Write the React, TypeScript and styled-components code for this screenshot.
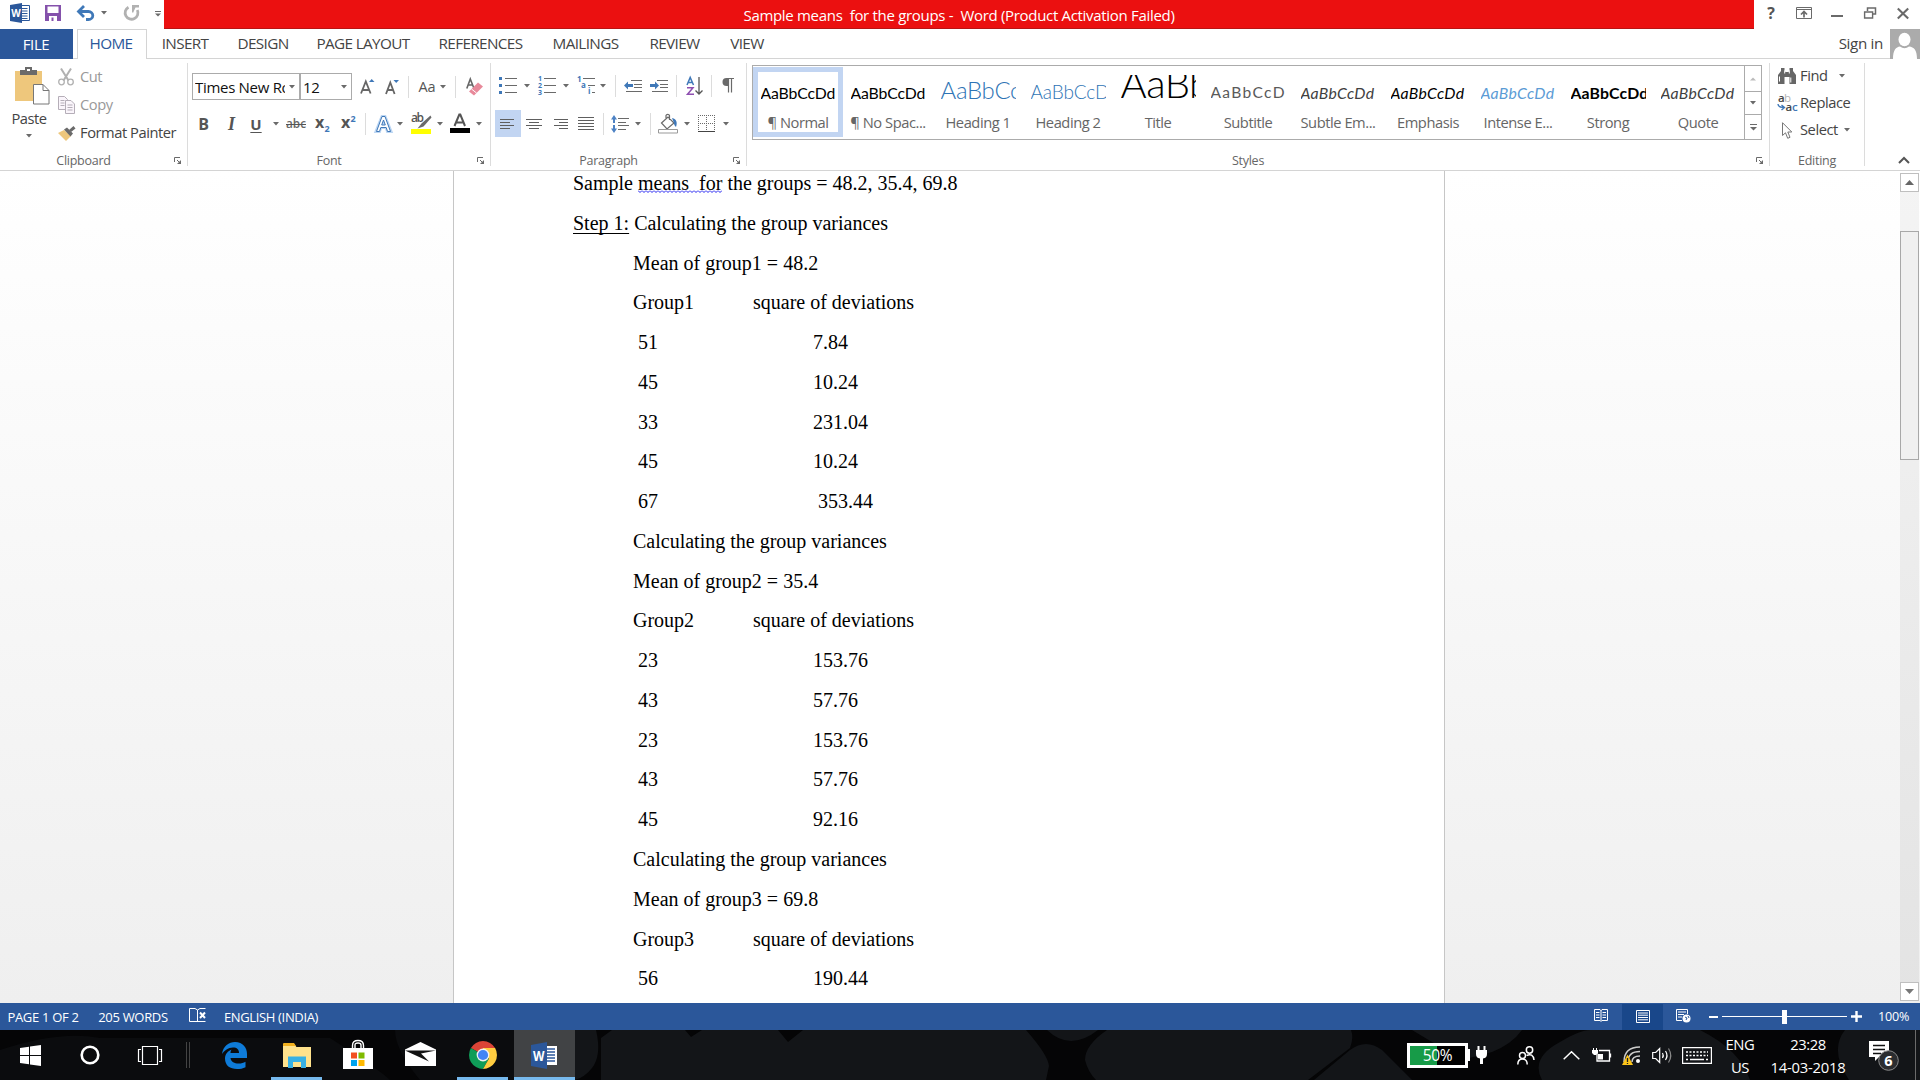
import React from "react";
import styled, { createGlobalStyle, css } from "styled-components";

const UI = `"Open Sans", "Noto Sans", sans-serif`;
const DOC = `"Liberation Serif", "Times New Roman", serif`;

const Global = createGlobalStyle`
  * { box-sizing: border-box; }
  html, body { margin: 0; padding: 0; overflow: hidden; }
  svg { display: block; flex: none; overflow: visible; }
`;

const Screen = styled.div`
  display: flex;
  flex-direction: column;
  width: 1920px;
  height: 1080px;
  overflow: hidden;
  background: #fff;
  font-family: ${UI};
  color: #444;
`;

const Label = styled.span<{ $size?: number; $ls?: number; $color?: string }>`
  flex: none;
  white-space: pre;
  font-size: ${(p) => p.$size ?? 14.7}px;
  letter-spacing: ${(p) => p.$ls ?? -0.45}px;
  color: ${(p) => p.$color ?? "#444"};
`;

const Slot = styled.div<{ $w: number; $ml?: number; $mt?: number }>`
  flex: none;
  display: flex;
  align-items: center;
  justify-content: center;
  width: ${(p) => p.$w}px;
  margin-left: ${(p) => p.$ml ?? 0}px;
  margin-top: ${(p) => p.$mt ?? 0}px;
`;

/* ---------- title bar ---------- */
const TitleBar = styled.header`
  display: flex;
  height: 29px;
`;
const QuickAccess = styled.div`
  display: flex;
  align-items: center;
  width: 164px;
  padding-bottom: 3px;
`;
const Title = styled.div`
  width: 1590px;
  height: 29px;
  background: #eb1010;
  border-bottom: 1px solid #b81414;
  display: flex;
  justify-content: center;
  line-height: 30px;
`;
const WindowButtons = styled.div`
  display: flex;
  align-items: center;
  flex: 1;
  padding-bottom: 3px;
`;

/* ---------- tabs ---------- */
const TabRow = styled.nav`
  display: flex;
  height: 30px;
  border-bottom: 1px solid #d4d4d4;
`;
const FileTab = styled.div`
  width: 73px;
  height: 30px;
  margin-right: 4px;
  padding-right: 1px;
  background: #2b579a;
  display: flex;
  justify-content: center;
  line-height: 30px;
`;
const Tab = styled.div<{ $w: number; $active?: boolean }>`
  width: ${(p) => p.$w}px;
  height: 30px;
  padding-right: 2px;
  display: flex;
  justify-content: center;
  line-height: 28px;
  ${(p) =>
    p.$active &&
    css`
      background: #fff;
      border: 1px solid #d4d4d4;
      border-bottom: 0;
      line-height: 26px;
      margin-right: 1px;
    `}
`;
const Account = styled.div`
  margin-left: auto;
  display: flex;
  line-height: 29px;
  gap: 7px;
  height: 30px;
`;

/* ---------- ribbon ---------- */
const Ribbon = styled.section`
  display: flex;
  height: 112px;
  padding: 4px 0;
  border-bottom: 1px solid #d4d4d4;
`;
const Group = styled.div<{ $w: number }>`
  display: flex;
  flex-direction: column;
  width: ${(p) => p.$w}px;
  height: 103px;
  border-right: 1px solid #dcdcdc;
`;
const GroupBody = styled.div`
  height: 91px;
  display: flex;
`;
const Rows = styled.div`
  display: flex;
  flex-direction: column;
`;
const Row = styled.div<{ $h: number; $mt?: number }>`
  display: flex;
  align-items: center;
  height: ${(p) => p.$h}px;
  margin-top: ${(p) => p.$mt ?? 0}px;
`;
const SideText = styled.div<{ $w: number; $ml: number }>`
  flex: none;
  width: ${(p) => p.$w}px;
  margin-left: ${(p) => p.$ml}px;
  padding-bottom: 2px;
  display: flex;
  white-space: nowrap;
`;
const Caption = styled.div`
  height: 12px;
  display: flex;
  align-items: center;
  line-height: 12px;
`;
const CaptionText = styled.div`
  flex: 1;
  display: flex;
  justify-content: center;
  padding-top: 2px;
`;
const Sep = styled.div<{ $ml: number }>`
  width: 1px;
  height: 22px;
  margin-left: ${(p) => p.$ml}px;
  background: #dcdcdc;
`;
const Combo = styled.div<{ $w: number; $ml?: number }>`
  display: flex;
  align-items: center;
  width: ${(p) => p.$w}px;
  height: 27px;
  margin-left: ${(p) => p.$ml ?? 0}px;
  border: 1px solid #ababab;
  padding: 0 4px 0 2px;
`;
const ComboText = styled.div`
  flex: 1;
  overflow: hidden;
  white-space: nowrap;
  font-size: 15px;
  letter-spacing: -0.3px;
  line-height: 24px;
  color: #111;
`;
const Glyph = styled.span<{ $size: number; $b?: boolean; $i?: boolean; $u?: boolean }>`
  font-size: ${(p) => p.$size}px;
  line-height: 20px;
  color: #555;
  font-weight: ${(p) => (p.$b ? 700 : 400)};
  font-style: ${(p) => (p.$i ? "italic" : "normal")};
  font-family: ${(p) => (p.$i ? DOC : UI)};
  text-decoration: ${(p) => (p.$u ? "underline" : "none")};
  text-decoration-thickness: 1px;
  text-underline-offset: 2px;
`;
const Pressed = styled.div`
  display: flex;
  align-items: center;
  justify-content: center;
  width: 26px;
  height: 27px;
  margin-left: 4px;
  background: #c2d5f2;
`;

/* ---------- style gallery ---------- */
const Gallery = styled.div`
  display: flex;
  width: 1010px;
  height: 75px;
  margin: 2px 0 0 5px;
  border: 1px solid #ababab;
`;
const Style = styled.div<{ $on?: boolean }>`
  width: 90px;
  height: 70px;
  margin-top: 1px;
  border: 5px solid ${(p) => (p.$on ? "#c2d5f2" : "transparent")};
  display: flex;
  flex-direction: column;
  align-items: center;
`;
const Preview = styled.div<{ $size: number; $ls: number; $color: string; $wt: number; $i?: boolean }>`
  width: 75px;
  height: 30px;
  margin-top: 3px;
  overflow: hidden;
  display: flex;
  align-items: flex-end;
  white-space: nowrap;
  font-family: Lato, "Open Sans", sans-serif;
  font-size: ${(p) => p.$size}px;
  letter-spacing: ${(p) => p.$ls}px;
  color: ${(p) => p.$color};
  font-weight: ${(p) => p.$wt};
  font-style: ${(p) => (p.$i ? "italic" : "normal")};
  line-height: ${(p) => 8 + p.$size * 0.74}px;
`;
const StyleName = styled.div`
  margin-top: 9px;
  line-height: 20px;
`;
const GalleryScroll = styled.div`
  margin-left: auto;
  width: 17px;
  border-left: 1px solid #ababab;
  display: flex;
  flex-direction: column;
`;
const GalleryBtn = styled.div<{ $h: number }>`
  height: ${(p) => p.$h}px;
  display: flex;
  align-items: center;
  justify-content: center;
  & + & { border-top: 1px solid #ababab; }
`;

/* ---------- document ---------- */
const Workspace = styled.main`
  display: flex;
  height: 832px;
  background: linear-gradient(#ffffff, #efefef);
`;
const Page = styled.article`
  width: 992px;
  margin-left: 453px;
  border: solid #c6c6c6;
  border-width: 0 1px;
  background: #fff;
  padding-left: 119px;
  overflow: hidden;
`;
const Line = styled.p<{ $indent?: boolean }>`
  margin: 0;
  padding-left: ${(p) => (p.$indent ? 60 : 0)}px;
  height: 39.77px;
  line-height: 39.77px;
  font-family: ${DOC};
  font-size: 20px;
  color: #000;
  white-space: pre;
  tab-size: 60px;
  &:first-child { margin-top: -7px; }
`;
const Flagged = styled.span`
  background: url("data:image/svg+xml,%3Csvg xmlns='http://www.w3.org/2000/svg' width='4' height='3'%3E%3Cpath d='M0 .5L2 2.5 4 .5' fill='none' stroke='%232020f0'/%3E%3C/svg%3E")
    repeat-x 0 calc(100% - 1px);
`;
const Under = styled.span`
  text-decoration: underline 1px;
  text-underline-offset: 3px;
  text-decoration-skip-ink: none;
`;
const Scrollbar = styled.div`
  margin: 2px 1px 2px auto;
  width: 19px;
  display: flex;
  flex-direction: column;
  background: linear-gradient(#f4f4f4, #e3e3e3);
`;
const ScrollBtn = styled.div`
  height: 19px;
  border: 1px solid #bfbfbf;
  background: #fff;
  display: flex;
  align-items: center;
  justify-content: center;
`;
const Thumb = styled.div`
  margin: 39px 0 auto;
  height: 229px;
  border: 1px solid #a8a8a8;
  background: #f0f0f0;
`;

/* ---------- status bar ---------- */
const StatusBar = styled.footer`
  display: flex;
  align-items: center;
  height: 27px;
  background: #2b579a;
`;
const ActiveView = styled.div`
  display: flex;
  align-items: center;
  justify-content: center;
  width: 41px;
  height: 26px;
  margin: 1px 0 0 14px;
  padding-bottom: 2px;
  background: #19478a;
`;
const ZoomTrack = styled.div`
  width: 125px;
  height: 1px;
  margin-left: 4px;
  background: #fff;
  display: flex;
  align-items: center;
  padding-left: 60px;
`;
const ZoomThumb = styled.div`
  flex: none;
  width: 5px;
  height: 14px;
  background: #fff;
`;

/* ---------- taskbar ---------- */
const Taskbar = styled.footer`
  position: relative;
  display: flex;
  height: 50px;
  background: #050506;
  overflow: hidden;
`;
const Wallpaper = styled.svg`
  position: absolute;
  inset: 0;
`;
const TaskItem = styled.div<{ $w: number; $ml?: number; $open?: boolean; $active?: boolean }>`
  position: relative;
  flex: none;
  display: flex;
  align-items: center;
  justify-content: center;
  width: ${(p) => p.$w}px;
  height: 50px;
  margin-left: ${(p) => p.$ml ?? 0}px;
  border-bottom: 3px solid ${(p) => (p.$open ? "#76b9ed" : "transparent")};
  padding-top: 3px;
  background: ${(p) => (p.$active ? "#414345" : "none")};
`;
const Battery = styled.div`
  flex: none;
  position: relative;
  width: 61px;
  height: 25px;
  border: 3px solid #fff;
  background: linear-gradient(90deg, #179b48 27px, #000 27px);
  display: flex;
  justify-content: center;
  line-height: 19px;
`;
const TwoLine = styled.div<{ $w: number; $ml: number }>`
  position: relative;
  flex: none;
  display: flex;
  flex-direction: column;
  align-items: center;
  width: ${(p) => p.$w}px;
  margin-left: ${(p) => p.$ml}px;
  line-height: 22.5px;
  padding-top: 3px;
`;
const ShowDesktop = styled.div`
  position: relative;
  width: 5px;
  margin-left: auto;
  border-left: 1px solid #6b6b6b;
`;

/* ---------- icons ---------- */
const G = "#6a6a6a";
const B = "#3f78b8";

const Arrow = ({ ml, c = "#6a6a6a" }: { ml: number; c?: string }) => (
  <Slot $w={6} $ml={ml}>
    <svg width="6" height="4" viewBox="0 0 6 4"><path d="M0 0h6L3 3.5z" fill={c} /></svg>
  </Slot>
);
const Launcher = () => (
  <Slot $w={20}>
    <svg width="7" height="7" viewBox="0 0 7 7"><path d="M.5 5V.5H6" fill="none" stroke={G} /><path d="M3 3l3 3" stroke={G} /><path d="M7 3v4H3z" fill={G} /></svg>
  </Slot>
);
const WordSmall = () => (
  <svg width="20" height="20" viewBox="0 0 20 20">
    <path d="M11 2.500h8.500v15H11" fill="#fff" stroke="#2b579a" />
    <path d="M12 5.500h5.500M12 8h5.500M12 10.500h5.500M12 13h5.500M12 15.500h5.500" stroke="#2b579a" />
    <path d="M0 2L12 0v20L0 18z" fill="#2b579a" />
    <text x="1.200" y="14" fontSize="11" fontWeight="700" fill="#fff" fontFamily="Open Sans" textLength="9.500" lengthAdjust="spacingAndGlyphs">W</text>
  </svg>
);
const Save = () => (
  <svg width="16" height="16" viewBox="0 0 16 16"><path d="M0 0h16v16H0z" fill="#8451ab" /><path d="M2.500 1.500h11V8h-11zM4 11h8v5H4z" fill="#fff" /><path d="M6.500 12.500h2V16h-2z" fill="#8451ab" /></svg>
);
const Undo = () => (
  <svg width="18" height="15" viewBox="0 0 18 15"><path d="M1.500 5.500h10a4.300 4 0 0 1 0 8H9" fill="none" stroke={B} strokeWidth="2.800" /><path d="M7 0L1.500 5.500 7 11" fill="none" stroke={B} strokeWidth="2.800" /></svg>
);
const Redo = () => (
  <svg width="16" height="16" viewBox="0 0 16 16"><path d="M4.500 2.200A6.400 6.400 0 1 0 13.300 5" fill="none" stroke="#b1b1b1" strokeWidth="2.800" /><path d="M8 0h7v2.500h-3.500L9 8 8 7z" fill="#b1b1b1" /></svg>
);
const Paste = () => (
  <svg width="35" height="38" viewBox="0 0 35 38">
    <path d="M0 4h27v30H0z" fill="#eec77c" /><path d="M5 8V3h5V0h7v3h5v5z" fill="#6a6a6a" /><path d="M12 2h3v2h-3z" fill="#fff" />
    <path d="M18.500 17.500h9.500l6 6v13.500H18.500z" fill="#fff" stroke="#777" /><path d="M28 17.500v6h6" fill="none" stroke="#777" />
  </svg>
);
const Cut = () => (
  <svg width="16" height="18" viewBox="0 0 16 18"><g fill="none" stroke="#b1b1b1" strokeWidth="1.800"><path d="M3 .5l7.500 12M13 .5L5.500 12.500" strokeWidth="2" /><circle cx="3.500" cy="14" r="2.800" strokeWidth="1.300" /><circle cx="12.500" cy="14" r="2.800" strokeWidth="1.300" /></g></svg>
);
const CopyIcon = () => (
  <svg width="17" height="18" viewBox="0 0 17 18"><g fill="#faf5fb" stroke="#b5aeb8"><path d="M.5.5h6l3 3v10H.5z" /><path d="M7.500 4.500h5.500l3.500 3.500v9.500h-9z" /></g><path d="M2.500 4.500h4M2.500 7h4M2.500 9.500h4M9.500 9h5M9.500 11.500h5M9.500 14h5" stroke="#b5aeb8" /></svg>
);
const Painter = () => (
  <svg width="18" height="15" viewBox="0 0 18 15"><path d="M0 7l6-3 7 6-5 5z" fill="#eec77c" /><path d="M6 3.500l3-2 6 6-2.500 3z" fill="#6a6a6a" /><path d="M11 4l4.500-4L17.500 2.500 13 6z" fill="#6a6a6a" /></svg>
);
const GrowFont = ({ down }: { down?: boolean }) => (
  <svg width="14" height="16" viewBox="0 0 14 16">
    <path d={down ? "M1 15L5.300 3.500 9.600 15M2.600 11h5.400" : "M1 14.500L5.800 2.500 10.600 14.500M2.600 11h6.400"} fill="none" stroke="#666" strokeWidth="1.800" />
    <path d={down ? "M8.500 1h5.500L11.200 4z" : "M9 3h5.500L11.700 0z"} fill={B} />
  </svg>
);
const Clear = () => (
  <svg width="17" height="18" viewBox="0 0 17 18"><path d="M.8 10.500L4.300 1l3.700 9.500M2 7h4.800" fill="none" stroke="#666" strokeWidth="1.600" /><path d="M3 13.500l9-9 5 4-9 9z" fill="#e8899a" /><path d="M5.500 11l5 4" stroke="#fff" /></svg>
);
const Effects = () => (
  <svg width="17" height="18" viewBox="0 0 17 18"><path d="M1 16.500L7 1.500h3l6 15h-3.500l-1.300-4H5.800l-1.300 4zM6.700 10h3.600L8.500 5z" fill="#fff" stroke="#bcd6f3" strokeWidth="3" /><path d="M1.500 16.500L7 1.500h3l5.500 15h-3l-1.300-4H5.800l-1.300 4zM6.700 10h3.600L8.500 5z" fill="#fff" stroke={B} /></svg>
);
const Highlight = () => (
  <svg width="21" height="20" viewBox="0 0 21 20"><text x="0" y="8" fontSize="12" fill="#555" fontFamily="Open Sans" fontWeight="600" textLength="13">ab</text><path d="M19.500 1.500l-9 8-4 5 6-2 8-9z" fill="#6a6a6a" /><path d="M0 15h20v5H0z" fill="#ff0" /></svg>
);
const FontColor = () => (
  <svg width="20" height="19" viewBox="0 0 20 19"><path d="M4.500 12L9.300.5h1L15 12M6 8.500h7.500" fill="none" stroke="#555" strokeWidth="2" /><path d="M0 14h20v5H0z" fill="#000" /></svg>
);
const ListIcon = ({ kind }: { kind: "bullet" | "num" | "multi" }) => (
  <svg width="18" height="18" viewBox="0 0 18 18">
    {kind === "bullet" && <><path d="M0 0h3v3H0zM0 7h3v3H0zM0 14h3v3H0z" fill={B} /><path d="M6 1.500h12M6 8.500h12M6 15.500h12" stroke={G} /></>}
    {kind === "num" && <><g fill={B} fontFamily="Open Sans" fontWeight="700" fontSize="7"><text x="0" y="4">1</text><text x="0" y="11">2</text><text x="0" y="18">3</text></g><path d="M6 1.500h12M6 8.500h12M6 15.500h12" stroke={G} /></>}
    {kind === "multi" && <><g fill={B} fontFamily="Open Sans" fontWeight="700" fontSize="8"><text x="0" y="5">1</text><text x="4" y="11">a</text><text x="11" y="17">i</text></g><path d="M6 1.500h12M11 8.500h7M15 15.500h3" stroke={G} /></>}
  </svg>
);
const Indent = ({ out }: { out?: boolean }) => (
  <svg width="18" height="12" viewBox="0 0 18 12"><path d="M7 .5h11M10 4.500h8M10 7.500h8M2 11.500h16" stroke={G} /><path d={out ? "M4 1.500L0 5.500l4 4V7h5V4H4z" : "M5 1.500l4 4-4 4V7H0V4h5z"} fill={B} /></svg>
);
const Sort = () => (
  <svg width="18" height="18" viewBox="0 0 18 18"><path d="M1 8L4.200.5 7.500 8M2 5.500h4.500" fill="none" stroke={B} strokeWidth="1.500" /><path d="M1 10.700h6L1.500 17.200H8" fill="none" stroke="#8e4fb0" strokeWidth="1.500" /><path d="M13 0v17M9.500 13.500L13 17l3.500-3.500" fill="none" stroke="#555" strokeWidth="1.300" /></svg>
);
const Pilcrow = () => (
  <svg width="12" height="15" viewBox="0 0 12 15"><path d="M4.500 .5H12M6.500 .5v14M9.500.5v14" stroke={G} strokeWidth="1.200" /><path d="M6 0H4.500a4 4 0 0 0 0 8H6z" fill={G} /></svg>
);
const Align = ({ k }: { k: "l" | "c" | "r" | "j" }) => {
  const short = { l: "M0 {y}h10", c: "M3 {y}h10", r: "M6 {y}h9", j: "M0 {y}h16" }[k];
  const long = { l: "M0 {y}h14", c: "M0 {y}h16", r: "M1 {y}h14", j: "M0 {y}h16" }[k];
  const ys = k === "j" ? [0.5, 3.5, 6.5, 9.5, 12.5] : [0.5, 3.5, 6.5, 9.5];
  return (
    <svg width="16" height={k === "j" ? 13 : 10} viewBox={`0 0 16 ${k === "j" ? 13 : 10}`}>
      {ys.map((y, i) => <path key={y} d={(i % 2 ? short : long).replace("{y}", String(y))} stroke="#5e5e5e" />)}
    </svg>
  );
};
const Spacing = () => (
  <svg width="18" height="18" viewBox="0 0 18 18"><path d="M7 3.500h11M7 7.500h8M7 10.500h11M7 14.500h8" stroke={G} /><path d="M3 0L0 4.500h2V8h2V4.500h2zM3 18l-3-4.500h2V10h2v3.500h2z" fill="#4d82c4" /></svg>
);
const Bucket = () => (
  <svg width="21" height="20" viewBox="0 0 21 20"><path d="M3.500 9L10 3l6 6-7 6zM8 5V1.500a1.800 1.500 0 0 1 3.500 0V6" fill="#fff" stroke={G} strokeWidth="1.200" /><path d="M14 4c5 1 5.500 5 4 9-1.500-1-2-3-2-4z" fill={B} /><path d="M.5 15.500h19v3.500H.5z" fill="#fff" stroke="#999" /></svg>
);
const Borders = () => (
  <svg width="17" height="17" viewBox="0 0 17 17"><path d="M0 .5h17M0 8.500h17M.5 0v16M8.500 0v16M16.500 0v16" stroke={G} strokeDasharray="1 1" /><path d="M0 16.500h17" stroke="#444" strokeWidth="1" /></svg>
);
const Find = () => (
  <svg width="18" height="16" viewBox="0 0 18 16"><path d="M0 16V7l3-4V0h3.500v3l1 1h3l1-1V0H15v3l3 4v9h-6.500V9h-5v7z" fill="#666" /><path d="M1.500 8.500v5M12.800 9.500v5M6.700 2.500v3M11.300 2.500v3" stroke="#fff" /></svg>
);
const ReplaceIcon = () => (
  <svg width="20" height="18" viewBox="0 0 20 18"><g fontFamily="Open Sans" fontSize="11.500"><text x="1" y="8" fill="#444" fontWeight="600">a</text><text x="7" y="8" fill="#b5b5b5">b</text><text x="8.500" y="17" fill="#444" fontWeight="600">a</text><text x="15" y="17" fill={B} fontWeight="600">c</text></g><path d="M1 10c0 3 2 3.500 6 3.500M4.500 11l3 2.500-3 2.500" fill="none" stroke={B} strokeWidth="1.400" /></svg>
);
const Cursor = () => (
  <svg width="11" height="17" viewBox="0 0 11 17"><path d="M.5.7v12.800l3-2.700 2.200 5.500 2.300-1L5.800 10h4z" fill="#fff" stroke="#777" /></svg>
);
const Avatar = () => (
  <svg width="30" height="30" viewBox="0 0 30 30"><path d="M0 0h30v30H0z" fill="#ababab" /><ellipse cx="14.500" cy="10.500" rx="6" ry="6.800" fill="#fff" /><path d="M3 30c0-9 3-12 7-12.500q4.500 3.500 9 0C24 18 27 21 27 30z" fill="#fff" /></svg>
);
const Chrome = () => (
  <svg width="28" height="28" viewBox="0 0 28 28">
    <path d="M14 14L1.900 7A14 14 0 0 1 26.100 7z" fill="#db4437" /><path d="M14 14L1.900 7A14 14 0 0 0 14 28l6-10.500z" fill="#0f9d58" /><path d="M14 14l6 3.500L14 28A14 14 0 0 0 26.100 7H14z" fill="#ffcd40" />
    <circle cx="14" cy="14" r="6.400" fill="#f1f1f1" /><circle cx="14" cy="14" r="5.100" fill="#4285f4" />
  </svg>
);
const WordTask = () => (
  <svg width="27" height="27" viewBox="0 0 27 27"><path d="M14 4h12v19H14z" fill="#fff" /><path d="M16 7h8M16 10h8M16 13h8M16 16h8M16 19h8" stroke="#2b579a" strokeWidth="1.500" /><path d="M0 3L16 0v27L0 24z" fill="#2b579a" /><text x="2" y="18.500" fontSize="14" fontWeight="700" fill="#fff" fontFamily="Open Sans" textLength="11.500" lengthAdjust="spacingAndGlyphs">W</text></svg>
);

const tabs: [string, number][] = [["INSERT", 76], ["DESIGN", 80], ["PAGE LAYOUT", 120], ["REFERENCES", 115], ["MAILINGS", 95], ["REVIEW", 83], ["VIEW", 62]];

const styleCells = [
  { n: "¶ Normal", t: "AaBbCcDd", s: 15.8, ls: -0.15, c: "#000", w: 400, on: true },
  { n: "¶ No Spac...", t: "AaBbCcDd", s: 15.8, ls: -0.15, c: "#000", w: 400 },
  { n: "Heading 1", t: "AaBbCc", s: 24, ls: -0.3, c: "#2e74b5", w: 300 },
  { n: "Heading 2", t: "AaBbCcD", s: 19, ls: -0.1, c: "#2e74b5", w: 300 },
  { n: "Title", t: "AaBb", s: 40, ls: -0.5, c: "#000", w: 300 },
  { n: "Subtitle", t: "AaBbCcD", s: 15.6, ls: 1.3, c: "#5a5a5a", w: 400 },
  { n: "Subtle Em...", t: "AaBbCcDd", s: 15.8, ls: 0.3, c: "#404040", w: 400, i: true },
  { n: "Emphasis", t: "AaBbCcDd", s: 15.8, ls: 0.3, c: "#000", w: 400, i: true },
  { n: "Intense E...", t: "AaBbCcDd", s: 15.8, ls: 0.3, c: "#5b9bd5", w: 400, i: true },
  { n: "Strong", t: "AaBbCcDd", s: 15.8, ls: 0.15, c: "#000", w: 700 },
  { n: "Quote", t: "AaBbCcDd", s: 15.8, ls: 0.3, c: "#404040", w: 400, i: true },
];

const body = [
  "Mean of group1 = 48.2", "Group1\tsquare of deviations", " 51\t\t\t7.84", " 45\t\t\t10.24", " 33\t\t\t231.04", " 45\t\t\t10.24", " 67\t\t\t 353.44",
  "Calculating the group variances", "Mean of group2 = 35.4", "Group2\tsquare of deviations", " 23\t\t\t153.76", " 43\t\t\t57.76", " 23\t\t\t153.76", " 43\t\t\t57.76", " 45\t\t\t92.16",
  "Calculating the group variances", "Mean of group3 = 69.8", "Group3\tsquare of deviations", " 56\t\t\t190.44",
];

export default function App() {
  return (
    <Screen>
      <Global />
      <TitleBar>
        <QuickAccess>
          <Slot $w={20} $ml={10}><WordSmall /></Slot>
          <Slot $w={16} $ml={15}><Save /></Slot>
          <Slot $w={18} $ml={16}><Undo /></Slot>
          <Arrow ml={6} />
          <Slot $w={17} $ml={16}><Redo /></Slot>
          <Slot $w={6} $ml={15} $mt={2}><svg width="6" height="6" viewBox="0 0 6 6"><path d="M0 .5h6" stroke={G} /><path d="M0 2.500h6L3 5.500z" fill={G} /></svg></Slot>
        </QuickAccess>
        <Title><Label $size={15} $ls={-0.31} $color="#fff">{"Sample means  for the groups -  Word (Product Activation Failed)"}</Label></Title>
        <WindowButtons>
          <Slot $w={10} $ml={12}><Glyph $size={16} $b>?</Glyph></Slot>
          <Slot $w={16} $ml={20}><svg width="16" height="12" viewBox="0 0 16 12"><path d="M.5.5h15v11H.5zM.5 2.500h15" fill="none" stroke={G} /><path d="M8 10.500V5M5 7.500l3-3 3 3" fill="none" stroke={G} strokeWidth="1.700" /></svg></Slot>
          <Slot $w={12} $ml={19} $mt={5}><svg width="12" height="2" viewBox="0 0 12 2"><path d="M0 0h12v2H0z" fill={G} /></svg></Slot>
          <Slot $w={12} $ml={21}><svg width="12" height="12" viewBox="0 0 12 12"><path d="M3.500 4V1h8v6H9" fill="none" stroke={G} strokeWidth="1.500" /><path d="M.6 5h8v6h-8z" fill="#fff" stroke={G} strokeWidth="1.400" /></svg></Slot>
          <Slot $w={12} $ml={21}><svg width="12" height="11" viewBox="0 0 12 11"><path d="M.8.500l10.400 10M11.200.500L.8 10.500" stroke={G} strokeWidth="2.100" /></svg></Slot>
        </WindowButtons>
      </TitleBar>

      <TabRow>
        <FileTab><Label $size={15} $ls={-0.4} $color="#fff">FILE</Label></FileTab>
        <Tab $w={70} $active><Label $size={15.3} $ls={-0.6} $color="#2b579a">HOME</Label></Tab>
        {tabs.map(([t, w]) => <Tab key={t} $w={w}><Label $size={15.3} $ls={-0.65}>{t}</Label></Tab>)}
        <Account><Label $size={15.2} $ls={-0.35}>Sign in</Label><Avatar /></Account>
      </TabRow>

      <Ribbon>
        <Group $w={188}>
          <GroupBody>
            <Rows>
              <Slot $w={42} $ml={11} $mt={4}><Paste /></Slot>
              <Slot $w={36} $ml={11} $mt={3}><Label>Paste</Label></Slot>
              <Slot $w={36} $ml={11} $mt={6}><Arrow ml={0} /></Slot>
            </Rows>
            <Rows>
              <Row $h={28}><Slot $w={16} $ml={5}><Cut /></Slot><SideText $w={24} $ml={6}><Label $color="#999">Cut</Label></SideText></Row>
              <Row $h={28}><Slot $w={17} $ml={5}><CopyIcon /></Slot><SideText $w={36} $ml={5}><Label $color="#999">Copy</Label></SideText></Row>
              <Row $h={28}><Slot $w={18} $ml={5}><Painter /></Slot><SideText $w={98} $ml={4}><Label>Format Painter</Label></SideText></Row>
            </Rows>
          </GroupBody>
          <Caption><CaptionText><Label $size={12.5} $ls={-0.25} $color="#666">Clipboard</Label></CaptionText><Launcher /></Caption>
        </Group>

        <Group $w={303}>
          <GroupBody>
            <Rows>
              <Row $h={27} $mt={10}>
                <Combo $w={108} $ml={4}><ComboText>Times New Ro</ComboText><Arrow ml={4} /></Combo>
                <Combo $w={52}><ComboText>12</ComboText><Arrow ml={3} /></Combo>
                <Slot $w={14} $ml={8}><GrowFont /></Slot>
                <Slot $w={12} $ml={12}><GrowFont down /></Slot>
                <Sep $ml={10} />
                <Slot $w={18} $ml={9}><Glyph $size={14.5}>Aa</Glyph></Slot>
                <Arrow ml={4} />
                <Sep $ml={9} />
                <Slot $w={17} $ml={10}><Clear /></Slot>
              </Row>
              <Row $h={27} $mt={10}>
                <Slot $w={11} $ml={10}><Glyph $size={16} $b>B</Glyph></Slot>
                <Slot $w={9} $ml={18}><Glyph $size={18} $b $i>I</Glyph></Slot>
                <Slot $w={12} $ml={14}><Glyph $size={15} $b $u>U</Glyph></Slot>
                <Arrow ml={11} />
                <Slot $w={20} $ml={7}><svg width="20" height="12" viewBox="0 0 20 12"><text x="0" y="10" fontSize="12" fontWeight="600" fill="#666" fontFamily="Open Sans" textLength="20" lengthAdjust="spacingAndGlyphs">abc</text><path d="M0 6.500h20" stroke="#555" /></svg></Slot>
                <Slot $w={15} $ml={9}><svg width="15" height="18" viewBox="0 0 15 18"><text x="0" y="13" fontSize="16" fontWeight="700" fill="#555" fontFamily="Open Sans">x</text><text x="9.500" y="17" fontSize="9" fontWeight="700" fill={B} fontFamily="Open Sans">2</text></svg></Slot>
                <Slot $w={15} $ml={11}><svg width="15" height="18" viewBox="0 0 15 18"><text x="0" y="13" fontSize="16" fontWeight="700" fill="#555" fontFamily="Open Sans">x</text><text x="9.500" y="7" fontSize="9" fontWeight="700" fill={B} fontFamily="Open Sans">2</text></svg></Slot>
                <Sep $ml={9} />
                <Slot $w={17} $ml={9}><Effects /></Slot>
                <Arrow ml={5} />
                <Slot $w={21} $ml={8}><Highlight /></Slot>
                <Arrow ml={5} />
                <Slot $w={20} $ml={7}><FontColor /></Slot>
                <Arrow ml={6} />
              </Row>
            </Rows>
          </GroupBody>
          <Caption><CaptionText><Label $size={12.5} $ls={-0.25} $color="#666">Font</Label></CaptionText><Launcher /></Caption>
        </Group>

        <Group $w={256}>
          <GroupBody>
            <Rows>
              <Row $h={27} $mt={9}>
                <Slot $w={18} $ml={8}><ListIcon kind="bullet" /></Slot><Arrow ml={7} />
                <Slot $w={18} $ml={8}><ListIcon kind="num" /></Slot><Arrow ml={7} />
                <Slot $w={18} $ml={8}><ListIcon kind="multi" /></Slot><Arrow ml={5} />
                <Sep $ml={9} />
                <Slot $w={18} $ml={8}><Indent out /></Slot>
                <Slot $w={18} $ml={8}><Indent /></Slot>
                <Sep $ml={8} />
                <Slot $w={18} $ml={9}><Sort /></Slot>
                <Sep $ml={7} />
                <Slot $w={12} $ml={10}><Pilcrow /></Slot>
              </Row>
              <Row $h={27} $mt={11}>
                <Pressed><Align k="l" /></Pressed>
                <Slot $w={16} $ml={5}><Align k="c" /></Slot>
                <Slot $w={15} $ml={11}><Align k="r" /></Slot>
                <Slot $w={16} $ml={10}><Align k="j" /></Slot>
                <Sep $ml={9} />
                <Slot $w={18} $ml={7}><Spacing /></Slot><Arrow ml={6} />
                <Sep $ml={9} />
                <Slot $w={21} $ml={7}><Bucket /></Slot><Arrow ml={5} />
                <Slot $w={17} $ml={8}><Borders /></Slot><Arrow ml={8} />
              </Row>
            </Rows>
          </GroupBody>
          <Caption><CaptionText><Label $size={12.5} $ls={-0.25} $color="#666">Paragraph</Label></CaptionText><Launcher /></Caption>
        </Group>

        <Group $w={1023}>
          <GroupBody>
            <Gallery>
              {styleCells.map((c) => (
                <Style key={c.n} $on={c.on}>
                  <Preview $size={c.s} $ls={c.ls} $color={c.c} $wt={c.w} $i={c.i}>{c.t}</Preview>
                  <StyleName><Label $color="#666">{c.n}</Label></StyleName>
                </Style>
              ))}
              <GalleryScroll>
                <GalleryBtn $h={25}><svg width="6" height="4" viewBox="0 0 6 4"><path d="M0 3.500h6L3 .5z" fill="#bbb" /></svg></GalleryBtn>
                <GalleryBtn $h={23}><Arrow ml={0} /></GalleryBtn>
                <GalleryBtn $h={25}><svg width="7" height="7" viewBox="0 0 7 7"><path d="M0 .5h7" stroke={G} /><path d="M0 3h7L3.500 6.500z" fill={G} /></svg></GalleryBtn>
              </GalleryScroll>
            </Gallery>
          </GroupBody>
          <Caption><CaptionText><Label $size={12.5} $ls={-0.25} $color="#666">Styles</Label></CaptionText><Launcher /></Caption>
        </Group>

        <Group $w={95}>
          <GroupBody>
            <Rows>
              <Row $h={26}><Slot $w={18} $ml={8}><Find /></Slot><SideText $w={30} $ml={4}><Label>Find</Label></SideText><Arrow ml={9} /></Row>
              <Row $h={27}><Slot $w={20} $ml={7}><ReplaceIcon /></Slot><SideText $w={54} $ml={3}><Label>Replace</Label></SideText></Row>
              <Row $h={28}><Slot $w={11} $ml={12}><Cursor /></Slot><SideText $w={41} $ml={7}><Label>Select</Label></SideText><Arrow ml={3} /></Row>
            </Rows>
          </GroupBody>
          <Caption><CaptionText><Label $size={12.5} $ls={-0.25} $color="#666">Editing</Label></CaptionText></Caption>
        </Group>
        <Slot $w={12} $ml={33} $mt={91}><svg width="12" height="7" viewBox="0 0 12 7"><path d="M1 6l5-5 5 5" fill="none" stroke="#555" strokeWidth="2" /></svg></Slot>
      </Ribbon>

      <Workspace>
        <Page>
          <Line>Sample <Flagged>{"means  for"}</Flagged> the groups = 48.2, 35.4, 69.8</Line>
          <Line><Under>Step 1:</Under> Calculating the group variances</Line>
          {body.map((l, i) => <Line key={i} $indent>{l}</Line>)}
        </Page>
        <Scrollbar>
          <ScrollBtn><svg width="9" height="5" viewBox="0 0 9 5"><path d="M0 5h9L4.500 0z" fill="#666" /></svg></ScrollBtn>
          <Thumb />
          <ScrollBtn><svg width="9" height="5" viewBox="0 0 9 5"><path d="M0 0h9L4.500 5z" fill="#777" /></svg></ScrollBtn>
        </Scrollbar>
      </Workspace>

      <StatusBar>
        <Slot $w={72} $ml={7}><Label $size={13} $ls={-0.3} $color="#fff">PAGE 1 OF 2</Label></Slot>
        <Slot $w={72} $ml={18}><Label $size={13} $ls={-0.3} $color="#fff">205 WORDS</Label></Slot>
        <Slot $w={17} $ml={20} $mt={-3}><svg width="17" height="15" viewBox="0 0 17 15"><path d="M9 13.500H.5V.5H6l2.500 1.500L11 .5h5.500M8.500 2v12" fill="none" stroke="#fff" /><path d="M11 4.500l5 5.500M16 4.500L11 10" stroke="#fff" strokeWidth="2" /><path d="M9 13.500h7.500" stroke="#fff" /></svg></Slot>
        <Slot $w={96} $ml={17}><Label $size={13} $ls={-0.35} $color="#fff">ENGLISH (INDIA)</Label></Slot>
        <Slot $w={14} $ml={1275} $mt={-3}><svg width="14" height="13" viewBox="0 0 14 13"><path d="M.5.5H6l1 1 1-1h5.500v11H8l-1 1-1-1H.5zM7 1v11" fill="none" stroke="#fff" /><path d="M2 3.500h3.500M2 6h3.500M2 8.500h3.500M8.500 3.500H12M8.500 6H12M8.500 8.500H12" stroke="#fff" /></svg></Slot>
        <ActiveView><svg width="14" height="13" viewBox="0 0 14 13"><path d="M.5.5h13v12H.5z" fill="none" stroke="#fff" /><path d="M2 3h10M2 5.200h10M2 7.500h10M2 9.800h10" stroke="#fff" /></svg></ActiveView>
        <Slot $w={15} $ml={13} $mt={-2}><svg width="15" height="14" viewBox="0 0 15 14"><path d="M6 11.500H.5V.5h11V5M2 3h8M2 5.500h6M2 8h4" fill="none" stroke="#fff" /><circle cx="10.500" cy="9.500" r="4" fill="#fff" /><path d="M9 8l2 1-1 2M12 7l1 2" stroke="#2b579a" fill="none" /></svg></Slot>
        <Slot $w={9} $ml={18}><svg width="9" height="2" viewBox="0 0 9 2"><path d="M0 0h9v2H0z" fill="#fff" /></svg></Slot>
        <ZoomTrack><ZoomThumb /></ZoomTrack>
        <Slot $w={11} $ml={4}><svg width="11" height="11" viewBox="0 0 11 11"><path d="M0 5.500h11M5.500 0v11" stroke="#fff" strokeWidth="2.400" /></svg></Slot>
        <Slot $w={31} $ml={16}><Label $size={12.6} $ls={-0.2} $color="#fff">100%</Label></Slot>
      </StatusBar>

      <Taskbar>
        <Wallpaper width="1920" height="50" viewBox="0 0 1920 50">
          <g fill="#0b0c0e"><path d="M0 20Q60 0 100 8H330Q380 40 390 50H0z" /><path d="M395 0q0 20 25 50h150V0z" /></g>
          <g fill="#131518">
            <path d="M570 0h26q6 25-4 38-7 9-17 12h-5z" />
            <path d="M601 50V8l11-8h73l6 7 11-7h76l10 12L803 0h223q22 25 23 36l-3 14z" />
            <path d="M1047 0q23 22 51 0zM1107 0q-22 15-22 30 3 12 11 20h212l42-32q4-10 1-18zM1314 50l36-30q16-12 32 0l30 30z" />
            <path d="M1412 0h110q-10 14-30 22l-30 8zM1542 50q-12-22 18-38 20-12 30-12h110q40 20 50 50zM1845 0q-16 20 4 50h71V0z" />
          </g>
        </Wallpaper>
        <TaskItem $w={22} $ml={19}><svg width="21" height="21" viewBox="0 0 21 21"><path d="M0 3l9-1.300V10H0zM10 1.500L21 0v10H10zM0 11h9v8.300L0 18zM10 11h11v10l-11-1.500z" fill="#fff" /></svg></TaskItem>
        <TaskItem $w={22} $ml={38}><svg width="20" height="20" viewBox="0 0 20 20"><circle cx="10" cy="10" r="8.300" fill="none" stroke="#fff" strokeWidth="2.600" /></svg></TaskItem>
        <TaskItem $w={26} $ml={36}><svg width="24" height="19" viewBox="0 0 24 19"><path d="M4.500.5h15v18h-15zM3 3.500H.5v12H3M21 3.500h2.500v12H21" fill="none" stroke="#fff" strokeWidth="1.200" /></svg></TaskItem>
        <TaskItem $w={6} $ml={22}><svg width="4" height="26" viewBox="0 0 4 26"><path d="M.5 0v26M3.500 0v26" stroke="#444" /></svg></TaskItem>
        <TaskItem $w={26} $ml={30}>
          <svg width="25" height="27" viewBox="0 0 25 27"><path d="M0 12C1 4 7 0 13 0c8 0 12 6 12 12v4H8.500c.5 4 4 5.500 8 5.500 3 0 5-.7 7-1.800v5.500C21 26.500 18 27 15 27 8 27 3 23.500 3 16.500 3 12 6 9 9.500 7.500 8.700 9 8.500 10 8.500 11H17c0-3.500-2-5.500-6-5.500C6 5.500 2.500 8.500 0 12z" fill="#0e7bd8" /></svg>
        </TaskItem>
        <TaskItem $w={51} $ml={24} $open>
          <svg width="28" height="25" viewBox="0 0 28 25"><path d="M0 1h11l2.500 3H28v20H0z" fill="#ffe28c" /><path d="M0 1q0-1 1-1h10l2 3H0z" fill="#f2b01e" /><path d="M5 13.500h18V25h-5v-6h-8v6H5z" fill="#38b1e4" /></svg>
        </TaskItem>
        <TaskItem $w={30} $ml={21}>
          <svg width="30" height="31" viewBox="0 0 30 31"><path d="M9.500 10V5.500q0-5 5.500-5t5.500 5V10M12 9V5q0-2 3-2t3 2v4" fill="none" stroke="#fff" strokeWidth="1.400" /><path d="M0 8h30v21H0z" fill="#fff" /><path d="M8 12.500h6v6H8z" fill="#f25022" /><path d="M15.500 12.500h6v6h-6z" fill="#7fba00" /><path d="M8 20h6v6H8z" fill="#00a4ef" /><path d="M15.500 20h6v6h-6z" fill="#ffb900" /></svg>
        </TaskItem>
        <TaskItem $w={31} $ml={32}>
          <svg width="31" height="26" viewBox="0 0 31 26"><path d="M0 7.500L15.500 0 31 7.500V24H0z" fill="#fff" /><path d="M0 8.500l24 11-8-8 15-3-15 0z" fill="#111" /></svg>
        </TaskItem>
        <TaskItem $w={51} $ml={21} $open><Chrome /></TaskItem>
        <TaskItem $w={61} $ml={6} $open $active><WordTask /></TaskItem>
        <TaskItem $w={65} $ml={831}><Battery><Label $size={15.5} $ls={-0.3} $color="#fff">50%</Label></Battery><svg width="2" height="12" viewBox="0 0 2 12"><path d="M0 0h2v12H0z" fill="#fff" /></svg></TaskItem>
        <TaskItem $w={11} $ml={5}><svg width="11" height="18" viewBox="0 0 11 18"><path d="M1.500 0h2v4h4V0h2v4H11v4q0 4-4 4.500V18H4v-5.500Q0 12 0 8V4h1.500z" fill="#fff" /></svg></TaskItem>
        <TaskItem $w={18} $ml={30}><svg width="18" height="19" viewBox="0 0 18 19"><g fill="none" stroke="#fff" strokeWidth="1.500"><circle cx="12.500" cy="4" r="3.200" /><circle cx="5.500" cy="9.500" r="3" /><path d="M.8 18.500q0-5.500 4.700-5.500t4.700 5.500M9.500 9.500q6.500-3 7.500 4.500" /></g></svg></TaskItem>
        <TaskItem $w={17} $ml={28}><svg width="17" height="9" viewBox="0 0 17 9"><path d="M.7 8.300L8.500.8l7.800 7.500" fill="none" stroke="#fff" strokeWidth="1.500" /></svg></TaskItem>
        <TaskItem $w={20} $ml={12}><svg width="20" height="14" viewBox="0 0 20 14"><path d="M5 4.500V13h12.500V2.500H7M18.500 5.500v4" fill="none" stroke="#fff" strokeWidth="1.300" /><path d="M6 6h5v5.500H6zM0 2h6v3L4 7H2L0 5zM1 0h1v2H1zM4 0h1v2H4z" fill="#fff" /></svg></TaskItem>
        <TaskItem $w={19} $ml={10}>
          <svg width="19" height="20" viewBox="0 0 19 20"><g fill="none" stroke="#ccc" strokeWidth="1.500"><path d="M2 17Q2 2 18 2M6 17Q6 6.500 18 6.500M10 17q0-6 8-6" /></g><circle cx="16" cy="16" r="2" fill="#fff" /><path d="M0 20L5.500 9.500 11 20z" fill="#fcc419" /><path d="M5.500 13v4M5.500 18v1" stroke="#222" strokeWidth="1.300" /></svg>
        </TaskItem>
        <TaskItem $w={20} $ml={11}><svg width="20" height="17" viewBox="0 0 20 17"><path d="M.7 5.500h3l4-4v14l-4-4h-3zM10.500 6q1.500 2.500 0 5M13.500 4q3 4.500 0 9" fill="none" stroke="#fff" strokeWidth="1.200" /><path d="M16.500 1.500q4.500 7 0 14" fill="none" stroke="#888" strokeWidth="1.200" /></svg></TaskItem>
        <TaskItem $w={30} $ml={10}><svg width="30" height="17" viewBox="0 0 30 17"><path d="M.6.6h28.800v15.800H.6z" fill="none" stroke="#fff" strokeWidth="1.200" /><path d="M4 5h22M4 8.500h22" stroke="#fff" strokeWidth="1.600" strokeDasharray="2 1.500" /><path d="M4 12.500h2M8 12.500h14M24 12.500h2" stroke="#fff" strokeWidth="1.300" /></svg></TaskItem>
        <TwoLine $w={40} $ml={8}><Label $size={14.8} $ls={-0.4} $color="#fff">ENG</Label><Label $size={14.8} $ls={-0.4} $color="#fff">US</Label></TwoLine>
        <TwoLine $w={80} $ml={8}><Label $size={14.8} $ls={-0.4} $color="#fff">23:28</Label><Label $size={14.8} $ls={-0.2} $color="#fff">14-03-2018</Label></TwoLine>
        <TaskItem $w={32} $ml={20}>
          <svg width="32" height="32" viewBox="0 0 32 32"><path d="M1 2h20v16H11l-4 4v-4H1z" fill="#fff" /><path d="M5 6.500h12M5 10.500h12M5 14.500h8" stroke="#111" strokeWidth="1.400" /><circle cx="20.500" cy="21.500" r="9.800" fill="#2b2d30" stroke="#8a8a8a" /><text x="20.500" y="26.500" textAnchor="middle" fontSize="14.500" fontWeight="700" fill="#fff" fontFamily="Open Sans">6</text></svg>
        </TaskItem>
        <ShowDesktop />
      </Taskbar>
    </Screen>
  );
}
